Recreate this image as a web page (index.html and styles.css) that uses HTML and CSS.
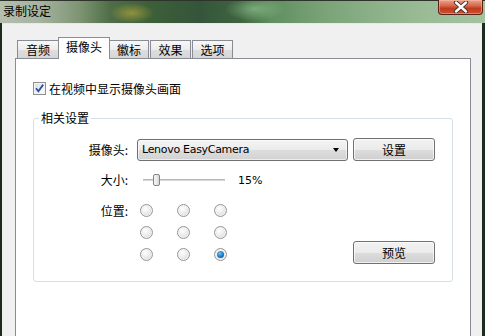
FILE: index.html
```html
<!DOCTYPE html>
<html lang="zh-CN">
<head>
<meta charset="utf-8">
<title>录制设定</title>
<link rel="stylesheet" href="styles.css">
</head>
<body>
<div class="window">
  <div class="titlebar">
    <span class="title">录制设定</span>
    <div class="close">
      <svg width="20" height="12" viewBox="0 0 20 12">
        <path d="M5 1.5 L15 10.5 M15 1.5 L5 10.5" stroke="#3a2a28" stroke-width="4.2" stroke-linecap="round"/>
        <path d="M5 1.5 L15 10.5 M15 1.5 L5 10.5" stroke="#ffffff" stroke-width="2.4" stroke-linecap="round"/>
      </svg>
    </div>
  </div>
  <div class="body">
    <div class="tabs">
      <div class="tab t-audio">音频</div>
      <div class="tab active">摄像头</div>
      <div class="tab t-logo">徽标</div>
      <div class="tab t-fx">效果</div>
      <div class="tab t-opt">选项</div>
    </div>
    <div class="panel">
      <div class="check-row">
        <span class="checkbox">
          <svg width="11" height="11" viewBox="0 0 11 11">
            <path d="M2 5.2 L4.4 8.2 L9.2 1.6" fill="none" stroke="#2a4fa8" stroke-width="1.8"/>
          </svg>
        </span>
        <span>在视频中显示摄像头画面</span>
      </div>
      <div class="group">
        <span class="legend">相关设置</span>
        <div class="row row-camera">
          <span class="label">摄像头:</span>
          <div class="combo">
            <span class="combo-text">Lenovo EasyCamera</span>
            <span class="combo-arrow"></span>
          </div>
          <button class="btn btn-set">设置</button>
        </div>
        <div class="row row-size">
          <span class="label">大小:</span>
          <div class="slider">
            <div class="track"></div>
            <div class="thumb"></div>
          </div>
          <span class="pct">15%</span>
        </div>
        <div class="row row-pos">
          <span class="label">位置:</span>
          <div class="radios">
            <span class="radio"></span><span class="radio"></span><span class="radio"></span>
            <span class="radio"></span><span class="radio"></span><span class="radio"></span>
            <span class="radio"></span><span class="radio"></span><span class="radio on"></span>
          </div>
          <button class="btn btn-preview">预览</button>
        </div>
      </div>
    </div>
  </div>
</div>
</body>
</html>
```
FILE: styles.css
```css
html, body {
  margin: 0;
  padding: 0;
}
body {
  width: 485px;
  height: 336px;
  overflow: hidden;
  background: #1c2c1c;
  font-family: "Noto Sans CJK SC", "DejaVu Sans", sans-serif;
  font-size: 12px;
  color: #000;
}
.window {
  width: 485px;
  height: 336px;
  display: flex;
  flex-direction: column;
  overflow: hidden;
}
.titlebar {
  height: 23px;
  flex: none;
  display: flex;
  justify-content: space-between;
  align-items: flex-start;
  border-top: 1px solid #2e342c;
  box-sizing: border-box;
  background:
    radial-gradient(ellipse 22px 10px at 132px 12px, rgba(170,160,60,0.75), rgba(170,160,60,0) 100%),
    radial-gradient(ellipse 30px 12px at 255px 8px, rgba(140,190,140,0.7), rgba(140,190,140,0) 100%),
    linear-gradient(90deg, #b4bfae 0px, #a6b39e 40px, #7d9473 80px, #4f6e47 110px, #3d5f38 150px, #34553a 200px, #3f6440 240px, #5f8e5f 270px, #78a276 320px, #8db28a 380px, #9cbc98 430px, #a4c2a0 485px);
}
.title {
  padding-left: 3px;
  line-height: 20px;
  font-size: 12px;
  color: #000;
}
.close {
  width: 45px;
  height: 15px;
  margin-right: 2px;
  margin-top: -1px;
  box-sizing: border-box;
  border: 1px solid #5a2216;
  border-top: none;
  border-radius: 0 0 4px 4px;
  background: linear-gradient(180deg, #e9a28e 0%, #d76a4c 40%, #c23a1c 60%, #c9532e 100%);
  box-shadow: inset 0 0 0 1px rgba(255,200,180,0.45);
  display: flex;
  justify-content: center;
  align-items: center;
}
.body {
  flex: 1;
  min-height: 0;
  overflow: hidden;
  margin: 0 3px 0 2px;
  background: #f0f0f0;
  border-top: 1px solid #e4ebe0;
  display: flex;
  flex-direction: column;
}
.tabs {
  display: flex;
  align-items: flex-end;
  height: 21px;
  flex: none;
  margin-top: 13px;
  margin-left: 15px;
  position: relative;
  z-index: 2;
}
.tab {
  height: 18px;
  box-sizing: border-box;
  border: 1px solid #898c95;
  border-bottom: none;
  background: linear-gradient(180deg, #f7f7f7 0%, #ececec 50%, #dedede 51%, #d6d6d6 100%);
  display: flex;
  justify-content: center;
  align-items: center;
  line-height: 1;
  padding-top: 1px;
}
.t-audio { width: 41px; border-right: none; }
.tab.active {
  width: 52px;
  height: 22px;
  margin-bottom: -1px;
  background: #ffffff;
  padding-top: 0;
  padding-bottom: 3px;
}
.t-logo { width: 39px; border-left: none; }
.t-fx { width: 41px; margin-left: 1px; }
.t-opt { width: 41px; margin-left: 1px; }
.panel {
  flex: 1;
  margin-left: 13px;
  margin-bottom: -4px;
  width: 456px;
  box-sizing: border-box;
  border: 1px solid #898c95;
  background: #ffffff;
  padding: 23px 17px 0 17px;
}
.check-row {
  display: flex;
  align-items: center;
  height: 13px;
  gap: 3px;
}
.checkbox {
  width: 13px;
  height: 13px;
  box-sizing: border-box;
  border: 1px solid #8f8f8f;
  background: linear-gradient(135deg, #dcdcdc 0%, #f4f4f4 70%, #ffffff 100%);
  box-shadow: inset 0 0 0 1px #f4f4f4;
  display: flex;
  justify-content: center;
  align-items: center;
  flex: none;
}
.group {
  position: relative;
  margin-top: 23px;
  width: 420px;
  box-sizing: border-box;
  border: 1px solid #d5dfe5;
  border-radius: 3px;
  padding: 19px 17px 20px 0;
}
.legend {
  position: absolute;
  left: 5px;
  top: -9px;
  padding: 0 2px;
  background: #ffffff;
  line-height: 16px;
}
.row {
  display: flex;
  align-items: center;
}
.label {
  width: 94px;
  text-align: right;
  flex: none;
  line-height: 14px;
}
.row-camera {
  height: 23px;
}
.combo {
  margin-left: 9px;
  width: 211px;
  height: 22px;
  box-sizing: border-box;
  border: 1px solid #707070;
  border-radius: 3px;
  background: linear-gradient(180deg, #f4f4f4 0%, #ebebeb 50%, #dddddd 51%, #d2d2d2 100%);
  box-shadow: inset 0 0 0 1px rgba(255,255,255,0.6);
  display: flex;
  align-items: center;
  justify-content: space-between;
  padding: 0 8px 0 4px;
}
.combo-text {
  font-family: "DejaVu Sans", sans-serif;
  font-size: 11px;
  letter-spacing: -0.3px;
}
.combo-arrow {
  width: 0;
  height: 0;
  border-left: 3.5px solid transparent;
  border-right: 3.5px solid transparent;
  border-top: 4px solid #000;
  margin-top: 1px;
}
.btn {
  font-family: "Noto Sans CJK SC", sans-serif;
  font-size: 12px;
  width: 82px;
  height: 23px;
  box-sizing: border-box;
  border: 1px solid #707070;
  border-radius: 3px;
  background: linear-gradient(180deg, #f2f2f2 0%, #ebebeb 50%, #dddddd 51%, #cfcfcf 100%);
  box-shadow: inset 0 0 0 1px rgba(255,255,255,0.7);
  padding: 0;
  margin: 0;
  color: #000;
  line-height: 1;
}
.btn-set {
  margin-left: 5px;
}
.row-size {
  margin-top: 10px;
  height: 18px;
}
.slider {
  margin-left: 9px;
  width: 94px;
  height: 18px;
  position: relative;
  flex: none;
}
.track {
  position: absolute;
  left: 6px;
  right: 6px;
  top: 8px;
  height: 2px;
  background: #d6d6d6;
  border-top: 1px solid #b8b8b8;
  box-sizing: border-box;
}
.thumb {
  position: absolute;
  left: 16px;
  top: 3px;
  width: 7px;
  height: 12px;
  box-sizing: border-box;
  border: 1px solid #858585;
  border-radius: 2px;
  background: linear-gradient(90deg, #f6f6f6 0%, #e8e8e8 60%, #d4d4d4 100%);
}
.pct {
  margin-left: 7px;
  font-family: "DejaVu Sans", sans-serif;
  font-size: 11px;
}
.row-pos {
  margin-top: 15px;
  align-items: flex-start;
}
.radios {
  margin-left: 12px;
  display: grid;
  grid-template-columns: repeat(3, 13px);
  grid-auto-rows: 13px;
  column-gap: 24px;
  row-gap: 9px;
}
.radio {
  width: 13px;
  height: 13px;
  box-sizing: border-box;
  border-radius: 50%;
  border: 1px solid #969696;
  background: radial-gradient(circle at 40% 35%, #ffffff 0%, #ececec 45%, #cfcfcf 100%);
  box-shadow: inset 0 0 0 1px #f3f3f3;
  position: relative;
}
.radio.on::after {
  content: "";
  position: absolute;
  left: 2px;
  top: 2px;
  width: 7px;
  height: 7px;
  border-radius: 50%;
  background: radial-gradient(circle at 40% 35%, #6fc6f4 0%, #1d75bf 55%, #0c3f7a 100%);
}
.btn-preview {
  margin-left: auto;
  align-self: flex-end;
  margin-bottom: -3px;
}
```
